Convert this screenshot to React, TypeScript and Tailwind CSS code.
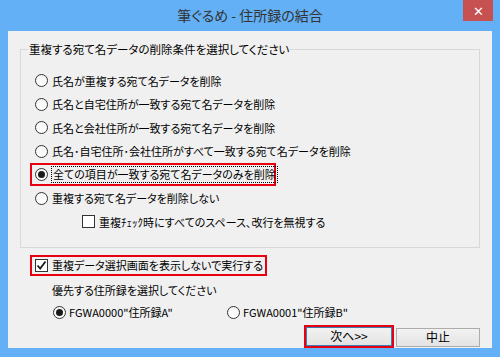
import type { ReactNode } from "react";

function Radio({ checked = false }: { checked?: boolean }) {
    return (
        <span className="flex h-[13px] w-[13px] shrink-0 items-center justify-center rounded-full border border-[#333333] bg-gradient-to-b from-[#f4f4f4] to-[#ffffff]">
            {checked && <span className="h-[7px] w-[7px] rounded-full bg-[#1a1a1a]" />}
        </span>
    );
}

function CheckBox({ checked = false }: { checked?: boolean }) {
    return (
        <span className="flex h-[13px] w-[13px] shrink-0 items-center justify-center border border-[#333333] bg-white">
            {checked && (
                <svg width="11" height="11" viewBox="0 0 11 11" fill="none">
                    <polyline points="1.5 5.5 4.2 8.5 9.5 1.5" stroke="#1a1a1a" strokeWidth="1.8" />
                </svg>
            )}
        </span>
    );
}

function Row({ children }: { children: ReactNode }) {
    return <div className="flex h-[23.5px] items-center gap-[4px] whitespace-nowrap pl-[14px]">{children}</div>;
}

function Button({ children, focused = false }: { children: ReactNode; focused?: boolean }) {
    return (
        <button
            className={
                focused
                    ? "flex h-[19px] w-[86px] items-center justify-center border border-[#3c7fb1] bg-gradient-to-b from-[#f2f2f2] to-[#e3e3e3] text-[12px]"
                    : "flex h-[19px] w-[84px] items-center justify-center border border-[#acacac] bg-gradient-to-b from-[#f2f2f2] to-[#e3e3e3] text-[12px]"
            }
        >
            {children}
        </button>
    );
}

export default function App() {
    return (
        <div className="flex h-[357px] w-[500px] flex-col bg-[#63b0f6] font-['Noto_Sans_CJK_JP',sans-serif] text-[11px] text-black [font-feature-settings:'palt']">
            <div className="relative flex h-[31px] shrink-0 items-center justify-center text-[14px] text-[#333333]">
                筆ぐるめ - 住所録の結合
                <div className="absolute right-[7px] top-0 flex h-[21px] w-[30px] items-center justify-center bg-[#c75050] text-[13px] text-white">
                    ✕
                </div>
            </div>

            <div className="mx-[8px] flex h-[317px] flex-col bg-[#f0f0f0] pt-[10px]">
                <fieldset className="mx-[12px] h-[207px] border border-[#d8d8d8] pb-[13px] pt-[12px]">
                    <legend className="ml-[7px] px-[1px] text-[11.5px] leading-[16px]">
                        重複する宛て名データの削除条件を選択してください
                    </legend>
                    <Row>
                        <Radio />
                        <span>氏名が重複する宛て名データを削除</span>
                    </Row>
                    <Row>
                        <Radio />
                        <span>氏名と自宅住所が一致する宛て名データを削除</span>
                    </Row>
                    <Row>
                        <Radio />
                        <span>氏名と会社住所が一致する宛て名データを削除</span>
                    </Row>
                    <Row>
                        <Radio />
                        <span>氏名･自宅住所･会社住所がすべて一致する宛て名データを削除</span>
                    </Row>
                    <div className="flex h-[23.5px] items-center whitespace-nowrap">
                        <div className="ml-[9px] flex h-[23px] w-[246px] items-center gap-[3px] border-2 border-[#e60012] pl-[3px]">
                            <Radio checked />
                            <span className="border border-dotted border-black px-[1px] leading-[15px]">
                                全ての項目が一致する宛て名データのみを削除
                            </span>
                        </div>
                    </div>
                    <Row>
                        <Radio />
                        <span>重複する宛て名データを削除しない</span>
                    </Row>
                    <div className="flex h-[23.5px] items-center gap-[4px] whitespace-nowrap pl-[61px]">
                        <CheckBox />
                        <span>重複ﾁｪｯｸ時にすべてのスペース、改行を無視する</span>
                    </div>
                </fieldset>

                <div className="ml-[22px] mt-[7px] flex h-[22px] w-[237px] items-center gap-[4px] whitespace-nowrap border-2 border-[#e60012] pl-[3px]">
                    <CheckBox checked />
                    <span>重複データ選択画面を表示しないで実行する</span>
                </div>

                <div className="ml-[44px] mt-[5px] flex h-[18px] items-center">優先する住所録を選択してください</div>

                <div className="mt-[4px] flex h-[18px] items-center whitespace-nowrap">
                    <div className="ml-[45px] flex w-[174px] items-center gap-[3px]">
                        <Radio checked />
                        <span>FGWA0000"住所録A"</span>
                    </div>
                    <div className="flex items-center gap-[3px]">
                        <Radio />
                        <span>FGWA0001"住所録B"</span>
                    </div>
                </div>

                <div className="mt-[4px] flex justify-end gap-[2px] pr-[12px]">
                    <div className="border-2 border-[#e60012]">
                        <Button focused>次へ&gt;&gt;</Button>
                    </div>
                    <div className="pt-[3px]">
                        <Button>中止</Button>
                    </div>
                </div>
            </div>
        </div>
    );
}
